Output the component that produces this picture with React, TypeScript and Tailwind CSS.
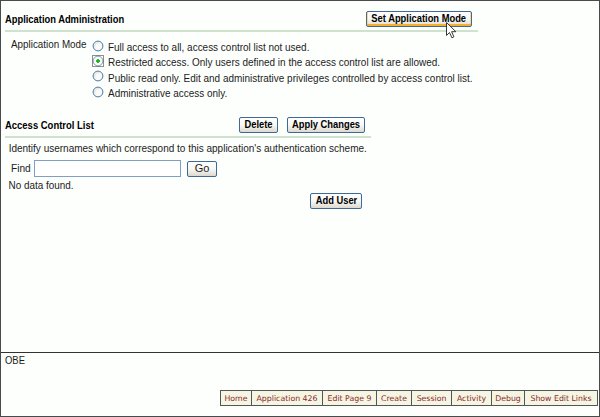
import type { ReactNode } from "react";

const modes = [
  "Full access to all, access control list not used.",
  "Restricted access. Only users defined in the access control list are allowed.",
  "Public read only. Edit and administrative privileges controlled by access control list.",
  "Administrative access only.",
];

const links = [
  { text: "Home", width: "w-[31px]" },
  { text: "Application 426", width: "w-[71px]" },
  { text: "Edit Page 9", width: "w-[54px]" },
  { text: "Create", width: "w-[35px]" },
  { text: "Session", width: "w-[40px]" },
  { text: "Activity", width: "w-[40px]" },
  { text: "Debug", width: "w-[33px]" },
  { text: "Show Edit Links", width: "w-[72px]" },
];

function Button({ children, className }: { children: ReactNode; className: string }) {
  return (
    <button
      className={
        "flex h-[16px] shrink-0 items-center justify-center whitespace-nowrap rounded-[2px] border border-[#3f6a96] bg-linear-to-b from-white via-[#f8f8f4] to-[#dcd9cf] pb-px leading-none " +
        className
      }
    >
      {children}
    </button>
  );
}

function BoldLabel({ children }: { children: ReactNode }) {
  return <span className="inline-block scale-x-[0.85] font-bold text-black">{children}</span>;
}

function Radio({ checked }: { checked: boolean }) {
  return (
    <svg width="12" height="12" viewBox="0 0 12 12" className="mb-[2px] shrink-0">
      <circle cx="6" cy="6" r="4.9" fill="#fafaf8" stroke={checked ? "#7f9bb8" : "#4778a8"} />
      {checked ? (
        <>
          <rect x="0.5" y="0.5" width="11" height="11" fill="none" stroke="#222" strokeDasharray="1 1" />
          <path d="M6 4 8 6 6 8 4 6Z" fill="#22b522" stroke="#22b522" strokeWidth="0.9" />
        </>
      ) : (
        <path d="M3 7.5A3.4 3.4 0 0 1 7.5 3" fill="none" stroke="#deded9" />
      )}
    </svg>
  );
}

export default function App() {
  return (
    <div className="relative flex h-[417px] w-[600px] flex-col overflow-hidden border border-[#4a4a4c] bg-[#fdfffc] font-['Liberation_Sans',Arial,sans-serif] text-[11px] leading-[15px] whitespace-nowrap text-[#1c1c1c]">
      <main className="flex h-[351px] shrink-0 flex-col pl-1">
        <header className="flex h-[31px] w-[473px] items-end justify-between border-b-2 border-[#cfe2cd] pb-[3px]">
          <h1 className="origin-left scale-x-[0.85] font-bold text-black">Application Administration</h1>
          <Button className="mr-[6px] w-[106px] shadow-[inset_0_-2px_0_#f5b12e,inset_1px_0_0_#fbd98f,inset_-1px_0_0_#fbd98f]">
            <BoldLabel>Set Application Mode</BoldLabel>
          </Button>
        </header>
        <section className="flex h-[85px] pt-[5px]">
          <div className="w-[87px] pl-[6px]">
            <span className="inline-block origin-left scale-x-[0.895]">Application Mode</span>
          </div>
          <div className="flex flex-col pt-[2px]">
            {modes.map((mode, i) => (
              <label key={mode} className="flex h-[15.3px] items-center gap-[4px]">
                <Radio checked={i === 1} />
                <span className="origin-left scale-x-[0.905] pt-[2px]">{mode}</span>
              </label>
            ))}
          </div>
        </section>
        <header className="flex h-[21px] w-[366px] items-end border-b-2 border-[#cfe2cd] pb-[3px]">
          <div className="w-[234px]">
            <h2 className="inline-block origin-left scale-x-[0.86] font-bold text-black">Access Control List</h2>
          </div>
          <Button className="w-[39px]">
            <BoldLabel>Delete</BoldLabel>
          </Button>
          <Button className="ml-[9px] w-[78px]">
            <BoldLabel>Apply Changes</BoldLabel>
          </Button>
        </header>
        <p className="w-fit origin-left scale-x-[0.909] pt-[3px] pl-[4px]">
          Identify usernames which correspond to this application's authentication scheme.
        </p>
        <div className="mt-[4px] flex h-[17px] items-center pl-[6px]">
          <label className="w-[23px] origin-left scale-x-[0.92]">Find</label>
          <input className="h-[17px] w-[147px] border border-[#7f9fc4] bg-white outline-none" />
          <Button className="ml-[6px] w-[30px]">Go</Button>
        </div>
        <p className="w-fit origin-left scale-x-[0.9] pt-[1px] pl-[4px]">No data found.</p>
        <Button className="ml-[305px] w-[52px]">
          <BoldLabel>Add User</BoldLabel>
        </Button>
      </main>
      <footer className="flex grow flex-col items-start border-t border-[#333336] pl-1">
        <span className="origin-left scale-x-[0.86]">OBE</span>
        <nav className="mt-[22px] ml-[215px] flex h-[16px] border border-[#555] bg-[#f5f5e3] font-['DejaVu_Sans',sans-serif] text-[7.8px] leading-[15px] text-[#8c2929]">
          {links.map((link) => (
            <a key={link.text} className={"flex justify-center border-r border-[#555] last:border-r-0 " + link.width}>
              {link.text}
            </a>
          ))}
        </nav>
      </footer>
      <svg className="absolute top-[21px] left-[445px]" width="11" height="17" viewBox="0 0 11 17">
        <path d="M.5.5v13l3-3 2.4 5.3 2-1L5.6 9.7h4.2Z" fill="#fff" stroke="#222" strokeWidth="0.9" />
      </svg>
    </div>
  );
}
